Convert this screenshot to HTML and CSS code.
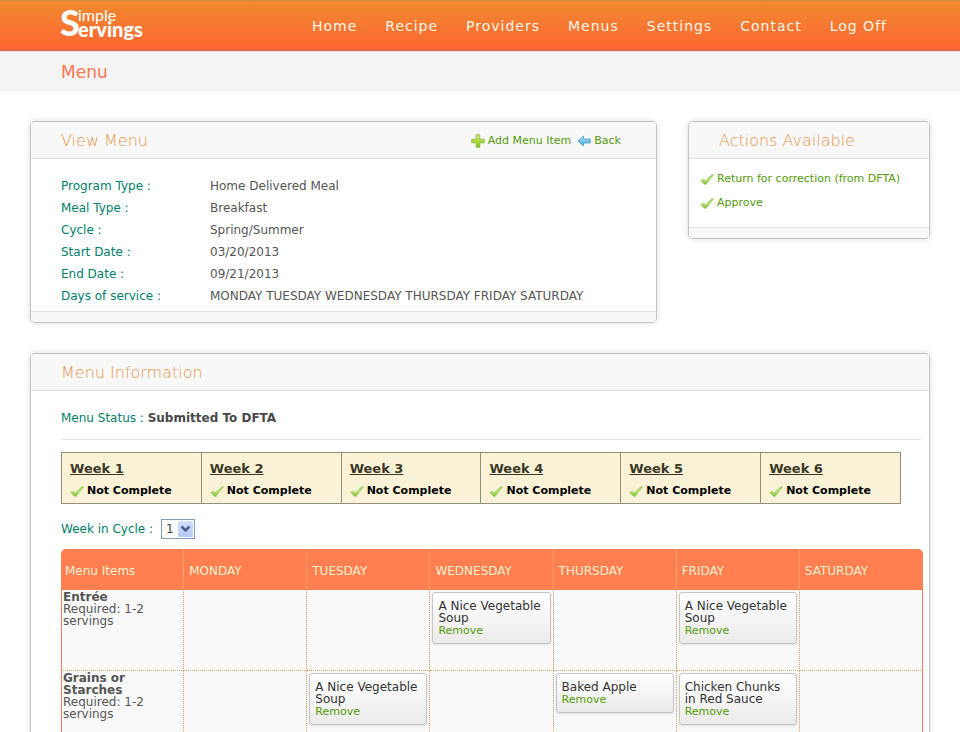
FILE: index.html
```html
<!DOCTYPE html>
<html lang="en">
<head>
<meta charset="utf-8">
<title>Simple Servings - Menu</title>
<link rel="stylesheet" href="styles.css">
</head>
<body>
<svg class="defs" aria-hidden="true">
  <defs>
    <linearGradient id="green" x1="0" y1="0" x2="0" y2="1"><stop offset="0" stop-color="#9ccf5a"/><stop offset=".5" stop-color="#b9e272"/><stop offset="1" stop-color="#86bf3e"/></linearGradient>
    <linearGradient id="lime" x1="0" y1="0" x2="0" y2="1"><stop offset="0" stop-color="#d8f27a"/><stop offset="1" stop-color="#86c40c"/></linearGradient>
    <linearGradient id="blue" x1="0" y1="0" x2="0" y2="1"><stop offset="0" stop-color="#b5e6fa"/><stop offset="1" stop-color="#3f9fd2"/></linearGradient>
    <symbol id="check" viewBox="0 0 14 12"><path d="M.4 7.400 3 6 5.200 7.600 12 1.500 13.800 1.700 6.200 11.400 4.400 11.400Z" fill="url(#green)" stroke="#a4cf74" stroke-width=".5" stroke-linejoin="round"/></symbol>
    <symbol id="plus" viewBox="0 0 14 14"><path d="M5.200.7h3.600v4.500h4.500v3.600H8.800v4.500H5.200V8.800H.7V5.200h4.500z" fill="url(#lime)" stroke="#8db848" stroke-width=".9" stroke-linejoin="round"/></symbol>
    <symbol id="back" viewBox="0 0 14 12"><path d="M.8 6 6.500 1V4H13.300V8H6.500V11Z" fill="url(#blue)" stroke="#5aa5cc" stroke-width=".9" stroke-linejoin="round"/></symbol>
  </defs>
</svg>

<header class="topbar">
  <a class="logo" href="#"><span class="logo-s">S</span><span class="logo-imple">imple</span><span class="logo-ervings">ervings</span></a>
  <nav class="nav">
    <a href="#">Home</a>
    <a href="#">Recipe</a>
    <a href="#">Providers</a>
    <a href="#">Menus</a>
    <a href="#">Settings</a>
    <a href="#">Contact</a>
    <a href="#">Log Off</a>
  </nav>
</header>
<div class="titlebar"><h1>Menu</h1></div>

<main class="page">
  <div class="top-row">
    <section class="panel view-menu">
      <header class="panel-head">
        <h2>View Menu</h2>
        <div class="head-links">
          <a class="action" href="#"><svg class="icon-plus"><use href="#plus"/></svg>Add Menu Item</a>
          <a class="action" href="#"><svg class="icon"><use href="#back"/></svg>Back</a>
        </div>
      </header>
      <dl class="details">
        <dt>Program Type :</dt><dd>Home Delivered Meal</dd>
        <dt>Meal Type :</dt><dd>Breakfast</dd>
        <dt>Cycle :</dt><dd>Spring/Summer</dd>
        <dt>Start Date :</dt><dd>03/20/2013</dd>
        <dt>End Date :</dt><dd>09/21/2013</dd>
        <dt>Days of service :</dt><dd>MONDAY TUESDAY WEDNESDAY THURSDAY FRIDAY SATURDAY</dd>
      </dl>
      <footer class="panel-foot"></footer>
    </section>

    <section class="panel actions">
      <header class="panel-head"><h2>Actions Available</h2></header>
      <ul class="action-list">
        <li><a class="action" href="#"><svg class="icon"><use href="#check"/></svg>Return for correction (from DFTA)</a></li>
        <li><a class="action" href="#"><svg class="icon"><use href="#check"/></svg>Approve</a></li>
      </ul>
      <footer class="panel-foot"></footer>
    </section>
  </div>

  <section class="panel">
    <header class="panel-head"><h2>Menu Information</h2></header>
    <div class="info">
      <p class="status">Menu Status : <strong>Submitted To DFTA</strong></p>
      <ul class="weeks">
        <li><a href="#">Week 1</a><span class="state"><svg class="icon"><use href="#check"/></svg>Not Complete</span></li>
        <li><a href="#">Week 2</a><span class="state"><svg class="icon"><use href="#check"/></svg>Not Complete</span></li>
        <li><a href="#">Week 3</a><span class="state"><svg class="icon"><use href="#check"/></svg>Not Complete</span></li>
        <li><a href="#">Week 4</a><span class="state"><svg class="icon"><use href="#check"/></svg>Not Complete</span></li>
        <li><a href="#">Week 5</a><span class="state"><svg class="icon"><use href="#check"/></svg>Not Complete</span></li>
        <li><a href="#">Week 6</a><span class="state"><svg class="icon"><use href="#check"/></svg>Not Complete</span></li>
      </ul>
      <div class="cycle">
        <label for="week">Week in Cycle :</label>
        <span class="select-box">
          <select id="week"><option>1</option><option>2</option><option>3</option><option>4</option><option>5</option><option>6</option></select>
          <span class="arrow"><svg viewBox="0 0 15 16"><path d="M3.500 5.500 7.500 9.500 11.500 5.500" fill="none" stroke="#4d6185" stroke-width="2.600"/></svg></span>
        </span>
      </div>
      <table class="menu">
        <thead>
          <tr><th>Menu Items</th><th>MONDAY</th><th>TUESDAY</th><th>WEDNESDAY</th><th>THURSDAY</th><th>FRIDAY</th><th>SATURDAY</th></tr>
        </thead>
        <tbody>
          <tr>
            <td class="kind"><strong>Entrée</strong><br>Required: 1-2 servings</td>
            <td></td>
            <td></td>
            <td><div class="dish">A Nice Vegetable Soup<a href="#">Remove</a></div></td>
            <td></td>
            <td><div class="dish">A Nice Vegetable Soup<a href="#">Remove</a></div></td>
            <td></td>
          </tr>
          <tr>
            <td class="kind"><strong>Grains or Starches</strong><br>Required: 1-2 servings</td>
            <td></td>
            <td><div class="dish">A Nice Vegetable Soup<a href="#">Remove</a></div></td>
            <td></td>
            <td><div class="dish">Baked Apple<a href="#">Remove</a></div></td>
            <td><div class="dish">Chicken Chunks in Red Sauce<a href="#">Remove</a></div></td>
            <td></td>
          </tr>
        </tbody>
      </table>
    </div>
  </section>
</main>
</body>
</html>
```
FILE: styles.css
```css
* { box-sizing: border-box; }

html { height: 100%; overflow: hidden; }

body {
  margin: 0;
  height: 100%;
  overflow: hidden;
  background: #fff;
  color: #555;
  font: 12px/22px Verdana, "DejaVu Sans", sans-serif;
}

a { color: #529a08; text-decoration: none; }
h1, h2, p, ul, dl, dd { margin: 0; padding: 0; }
ul { list-style: none; }

.defs { position: absolute; width: 0; height: 0; }
.icon { width: 14px; height: 12px; flex: none; }
.icon-plus { width: 14px; height: 14px; flex: none; }

/* Top bar */
.topbar {
  display: flex;
  justify-content: space-between;
  height: 51px;
  padding: 0 73px 0 60px;
  background: linear-gradient(#f08a2e, #ff6633);
  border-top: 1px solid #cf9140;
  border-bottom: 1px solid #d9694c;
}

.logo {
  display: grid;
  grid-template: 14px 16px / 18px auto;
  align-content: start;
  padding-top: 6px;
  color: #fff;
  font-family: "Century Gothic", Lato, sans-serif;
}
.logo-s { grid-row: 1 / 3; font-size: 36px; font-weight: 900; line-height: 30px; }
.logo-imple { font-size: 16px; font-weight: 400; line-height: 16px; }
.logo-ervings { font-size: 20px; font-weight: 900; line-height: 16px; }

.nav { display: flex; gap: 28px; align-items: center; }
.nav a { color: #fff6e8; font-size: 14px; letter-spacing: 1px; }

.titlebar {
  height: 40px;
  padding: 0 61px;
  background: #f4f4f4;
  border-top: 1px solid #e4dedc;
  border-bottom: 1px solid #ececec;
}
.titlebar h1 { color: #ff7650; font-size: 17px; font-weight: 400; line-height: 40px; }

/* Panels */
.page { display: grid; gap: 30px; padding: 30px; }
.top-row { display: flex; gap: 31px; align-items: flex-start; }
.view-menu { flex: 1; }
.actions { width: 242px; }

.panel {
  border: 1px solid #c4c4c4;
  border-radius: 5px;
  background: #fff;
  box-shadow: 0 0 6px #ddd;
  overflow: hidden;
}
.panel-head {
  display: flex;
  justify-content: space-between;
  align-items: center;
  height: 37px;
  padding: 2px 35px 0 30px;
  background: #f8f8f8;
  border-bottom: 1px solid #e2e2e2;
}
.panel-head h2 { color: #e6954c; font-size: 16px; font-weight: 200; }
.panel-foot { height: 11px; background: #f8f8f8; border-top: 1px solid #e2e2e2; }

.action { display: flex; align-items: center; gap: 3px; font-size: 11px; }
.head-links { display: flex; gap: 6px; }

.details {
  display: grid;
  grid-template-columns: 149px 1fr;
  padding: 16px 30px 4px;
}
.details dt { color: #00806a; }

.action-list { display: grid; gap: 2px; padding: 9px 11px 13px; }

/* Menu information */
.info { padding: 16px 6px 30px 30px; }
.status { padding-bottom: 10px; margin-right: 2px; color: #00806a; border-bottom: 1px solid #e6e6e6; }
.status strong { color: #484848; }

.weeks {
  display: grid;
  grid-template-columns: repeat(6, minmax(0, 1fr));
  margin: 12px 22px 15px 0;
  border: 1px solid #8f8f80;
  border-right: 0;
  background: #f9f2d7;
}
.weeks li { height: 50px; padding: 5px 8px 3px; border-right: 1px solid #8f8f80; }
.weeks a { color: #3b3826; font-size: 13px; font-weight: 700; text-decoration: underline; }
.state { display: flex; align-items: center; gap: 3px; color: #000; font-size: 11px; font-weight: 700; }

.cycle { display: flex; align-items: center; gap: 8px; height: 20px; margin-bottom: 10px; color: #00806a; }
.select-box { position: relative; }
.select-box select {
  display: block;
  appearance: none;
  width: 34px;
  height: 20px;
  padding: 0 4px;
  border: 1px solid #7f9db9;
  border-radius: 0;
  background: #fff;
  color: #444;
  font: inherit;
  line-height: 18px;
}
.arrow {
  position: absolute;
  top: 2px;
  right: 2px;
  width: 15px;
  height: 16px;
  border-radius: 1px;
  background: linear-gradient(#d3e0fd, #b3c9f7);
  pointer-events: none;
}
.arrow svg { display: block; }

.menu { width: 100%; table-layout: fixed; border-spacing: 0; }
.menu th {
  height: 41px;
  padding: 2px 5px 0;
  background: #ff7f50;
  border-right: 1px solid #ffa263;
  color: #ffefcf;
  font-weight: 400;
  text-align: left;
}
.menu th:first-child { border-top-left-radius: 5px; padding-left: 4px; }
.menu th:last-child { border-right: 0; border-top-right-radius: 5px; }
.menu td {
  height: 81px;
  padding: 2px;
  background: #f9f9f9;
  border-right: 1px dotted #dda066;
  border-bottom: 1px dotted #dda066;
  line-height: 12px;
  vertical-align: top;
}
.menu td:first-child { border-left: 1px solid #f0815c; }
.menu td:last-child { border-right: 1px solid #f0815c; }
.menu .kind { padding: 1px; }

.dish {
  padding: 7px 5px 6px;
  border: 1px solid #c6c6c6;
  border-radius: 3px;
  background: linear-gradient(#fff, #ebebeb);
  box-shadow: 0 1px 2px #ddd;
  color: #333;
}
.dish a { display: block; padding-top: 1px; font-size: 11px; }
```
